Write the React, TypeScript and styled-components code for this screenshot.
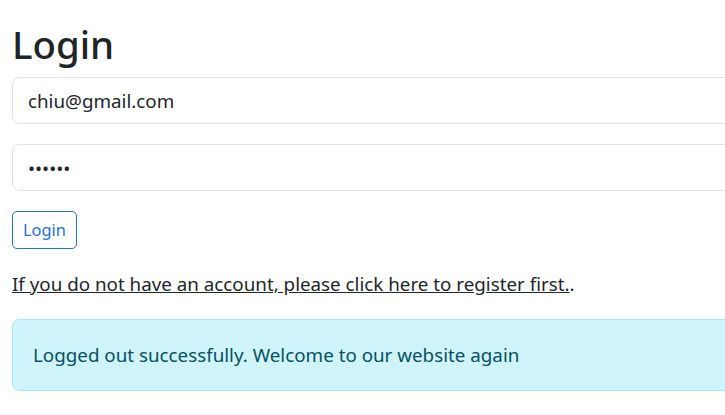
import React from "react";
import styled, { createGlobalStyle } from "styled-components";

const GlobalStyle = createGlobalStyle`
  html, body {
    margin: 0;
    padding: 0;
    background: #ffffff;
    overflow: hidden;
  }
  body {
    font-family: "Noto Sans", "Open Sans", sans-serif;
    font-size: 18.8px;
    line-height: 30px;
    color: #212529;
  }
  * { box-sizing: border-box; }
`;

const Page = styled.main`
  width: 820px;
  padding: 21px 0 0 12px;
`;

const Title = styled.h1`
  margin: 0 0 10px;
  font-size: 38.4px;
  font-weight: 500;
  line-height: 46px;
`;

const Form = styled.form`
  display: flex;
  flex-direction: column;
  align-items: flex-start;
`;

const Field = styled.input`
  display: block;
  width: 100%;
  height: 47px;
  margin: 0 0 20px;
  padding: 7px 15px;
  font: inherit;
  color: #212529;
  background: #fff;
  border: 1px solid #dee2e6;
  border-radius: 7.5px;
  outline: none;
`;

const SubmitButton = styled.button`
  height: 38px;
  padding: 0 10px;
  margin: 0 0 20px;
  font: inherit;
  font-size: 16.4px;
  line-height: 1.5;
  color: #1f6fd6;
  background: transparent;
  border: 1px solid #1f6fd6;
  border-radius: 5px;
  cursor: pointer;
`;

const Note = styled.p`
  margin: 0 0 20px;
`;

const RegisterLink = styled.a`
  color: #212529;
  text-decoration: underline;
`;

const Alert = styled.div`
  padding: 20px;
  background: #cff4fc;
  border: 1px solid #a9e4f3;
  border-radius: 7.5px;
  color: #055160;
`;

export default function App() {
  return (
    <>
      <GlobalStyle />
      <Page>
        <Title>Login</Title>
        <Form onSubmit={(e) => e.preventDefault()}>
          <Field type="email" defaultValue="chiu@gmail.com" />
          <Field type="password" defaultValue="123456" />
          <SubmitButton type="submit">Login</SubmitButton>
        </Form>
        <Note>
          <RegisterLink href="#">
            If you do not have an account, please click here to register first.
          </RegisterLink>
          .
        </Note>
        <Alert>Logged out successfully. Welcome to our website again</Alert>
      </Page>
    </>
  );
}
